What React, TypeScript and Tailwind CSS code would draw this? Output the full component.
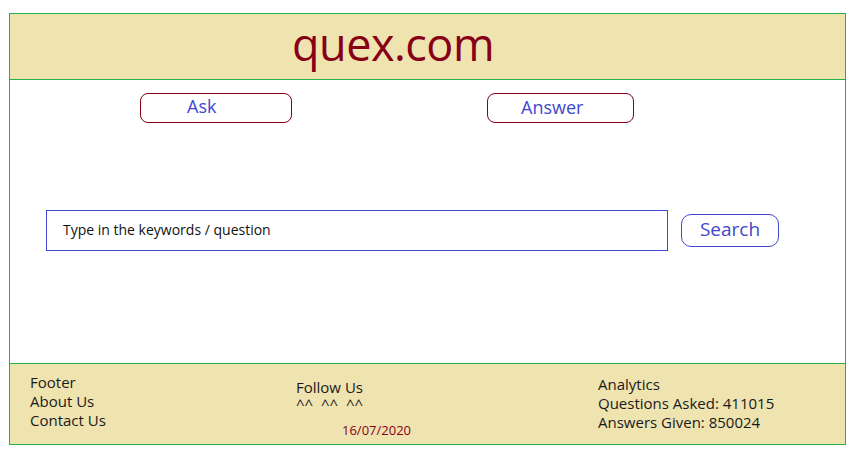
export default function App() {
  return (
    <div className="min-h-screen bg-white pt-[13px] pl-[9px]" style={{ fontFamily: '"Open Sans", "Noto Sans", sans-serif' }}>
      {/* green frame: 1px padding + 1px gaps between the three bands */}
      <div className="w-[837px] bg-[#22b14c] p-px flex flex-col gap-px">
        <header className="h-[65px] bg-[#efe3b0] pl-[282px] pt-[8px]">
          <h1 className="text-[45px] leading-[44px] text-[#880015] tracking-[-0.5px]">quex.com</h1>
        </header>

        <main className="h-[283px] bg-white">
          <div className="flex pt-[13px]">
            <button className="ml-[130px] w-[152px] h-[30px] border border-[#880015] rounded-[8px] text-left pl-[46px] pb-[4px] text-[18px] leading-[24px] text-[#3f48cc]">
              Ask
            </button>
            <button className="ml-[195px] w-[147px] h-[30px] border border-[#880015] rounded-[8px] text-left pl-[33px] pb-[2px] text-[18px] leading-[24px] text-[#3f48cc]">
              Answer
            </button>
          </div>

          <div className="flex items-center pl-[36px] pt-[87px]">
            <div className="w-[622px] h-[41px] border border-[#3f48cc] flex items-center pl-[16px] pb-[3px] text-[14px] text-[#111]">
              Type in the keywords / question
            </div>
            <button className="ml-[13px] w-[98px] h-[33px] border border-[#3f48cc] rounded-[10px] pb-[4px] text-[19px] leading-[24px] text-[#3f48cc]">
              Search
            </button>
          </div>
        </main>

        <footer className="h-[80px] bg-[#efe3b0] flex text-[15px] leading-[19px] text-[#1a1a1a]">
          <div className="pl-[20px] pt-[9px] w-[286px]">
            <div>Footer</div>
            <div>About Us</div>
            <div>Contact Us</div>
          </div>
          <div className="pt-[14px] w-[302px]">
            <div>Follow Us</div>
            <div className="whitespace-pre leading-[14px]">^^  ^^  ^^</div>
            <div className="pl-[46px] pt-[11px] text-[13px] leading-[16px] text-[#880015]">16/07/2020</div>
          </div>
          <div className="pt-[11px]">
            <div>Analytics</div>
            <div>Questions Asked: 411015</div>
            <div>Answers Given: 850024</div>
          </div>
        </footer>
      </div>
    </div>
  );
}
